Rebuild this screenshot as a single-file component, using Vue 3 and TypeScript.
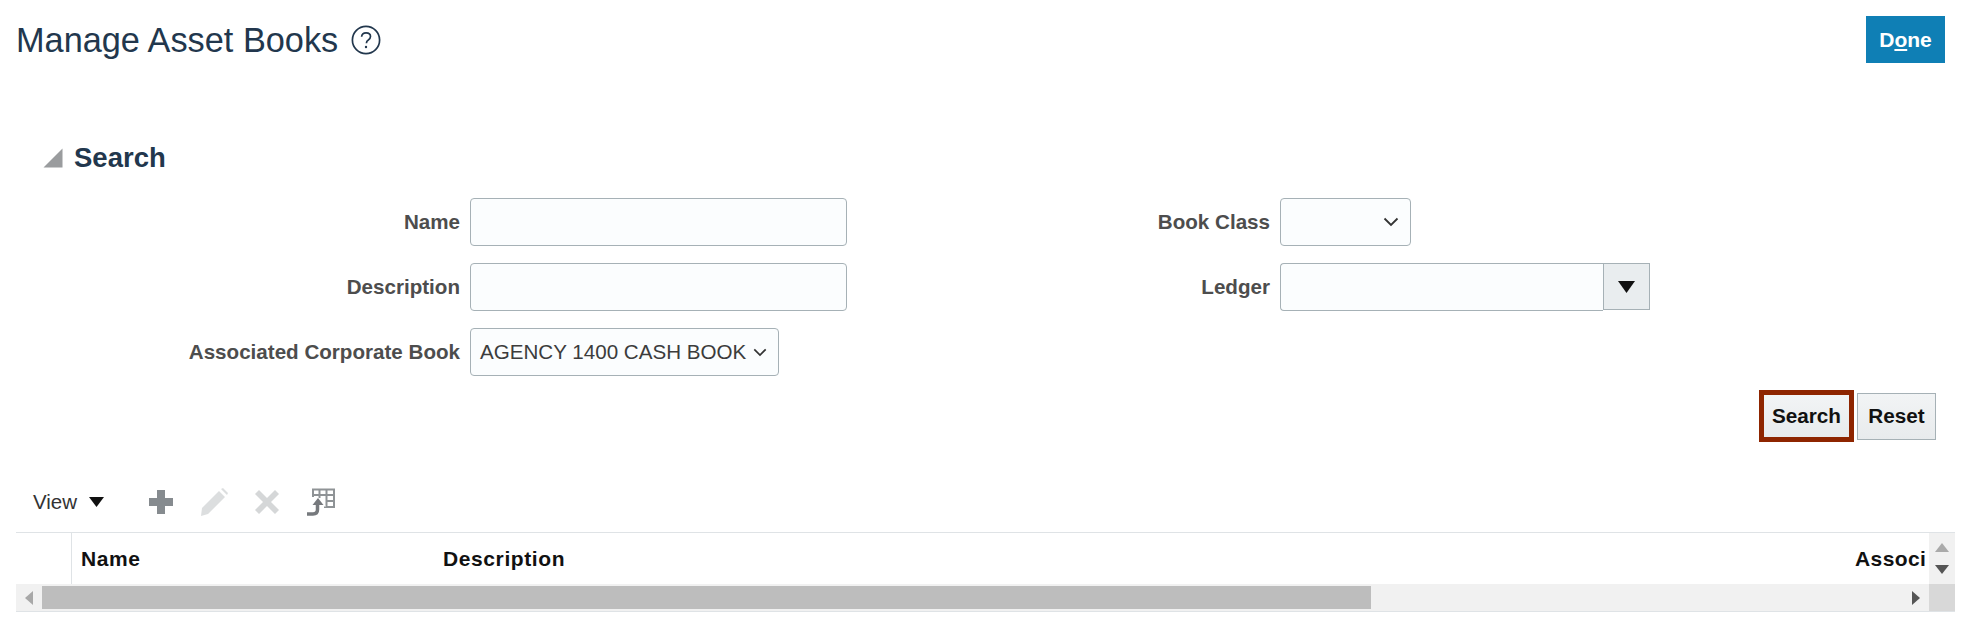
<script setup lang="ts">
const toolbarTitle = 'Manage Asset Books';
</script>

<template>
  <div class="page">
    <header class="page-head">
      <h1 class="page-title">
        {{ toolbarTitle }}
        <svg class="help" width="30" height="30" viewBox="0 0 30 30" fill="none">
          <circle cx="15" cy="15" r="13.6" stroke="#22374d" stroke-width="1.7" />
          <path d="M10.6 11.8c.2-2.6 2-4 4.500-4 2.600 0 4.400 1.500 4.400 3.700 0 1.700-.9 2.600-2.200 3.500-1.400.9-1.900 1.600-1.900 3.200" stroke="#22374d" stroke-width="1.700" />
          <circle cx="15" cy="22" r="1.200" fill="#22374d" />
        </svg>
      </h1>
      <button class="done">D<u>o</u>ne</button>
    </header>

    <section class="search-head">
      <svg width="20" height="20" viewBox="0 0 20 20"><path d="M19.500 .5v19H.5z" fill="#9a9c9e" /></svg>
      <h2>Search</h2>
    </section>

    <form class="form" @submit.prevent>
      <label class="lbl">Name</label>
      <div class="input name-input"></div>
      <label class="lbl">Book Class</label>
      <div class="input select class-select">
        <svg width="16" height="10" viewBox="0 0 16 10" fill="none"><path d="M1.500 1.500 8 8l6.500-6.500" stroke="#333" stroke-width="1.800" /></svg>
      </div>

      <label class="lbl">Description</label>
      <div class="input name-input"></div>
      <label class="lbl">Ledger</label>
      <div class="ledger">
        <div class="input ledger-input"></div>
        <div class="ledger-btn">
          <svg width="17" height="12" viewBox="0 0 17 12"><path d="M0 0h17L8.500 12z" fill="#111" /></svg>
        </div>
      </div>

      <label class="lbl">Associated Corporate Book</label>
      <div class="input select book-select">
        <span>AGENCY 1400 CASH BOOK</span>
        <svg width="14" height="9" viewBox="0 0 14 9" fill="none"><path d="M1.300 1.300 7 7l5.700-5.700" stroke="#333" stroke-width="1.700" /></svg>
      </div>
    </form>

    <div class="actions">
      <button class="btn btn-active">Search</button>
      <button class="btn">Reset</button>
    </div>

    <div class="toolbar">
      <span class="view">View</span>
      <svg class="view-caret" width="15" height="10" viewBox="0 0 15 10"><path d="M0 0h15L7.500 10z" fill="#111" /></svg>
      <svg class="tool tool-add" width="26" height="26" viewBox="0 0 26 26"><path d="M9 1h8v8h8v8h-8v8H9v-8H1V9h8z" fill="#868b8f" /></svg>
      <svg class="tool tool-edit" width="30" height="30" viewBox="0 0 30 30"><path d="M3 21 20 4l6 6L9 27l-7 2zM22 2l2-1 5 5-1 2z" fill="#dcdedf" /></svg>
      <svg class="tool tool-del" width="26" height="26" viewBox="0 0 26 26"><path d="m5 1 8 8 8-8 4 4-8 8 8 8-4 4-8-8-8 8-4-4 8-8-8-8z" fill="#d5d7d8" /></svg>
      <svg class="tool tool-freeze" width="28" height="28" viewBox="0 0 28 28" fill="none">
        <path d="M6 9V1.500h21V19H17M6 7h21M12.500 2v8M19.500 2v17M19 13h8" stroke="#8f9396" stroke-width="2" />
        <path d="M4 18.500l7.500-9 7.500 9z" fill="#fff" />
        <path d="M0 26h6q4.500 0 4.500-4.500V16" stroke="#76797d" stroke-width="3.500" />
        <path d="M5.500 17l5.500-7 5.500 7z" fill="#76797d" />
      </svg>
    </div>

    <div class="table">
      <div class="thead">
        <div class="th th-sel"></div>
        <div class="th th-name">Name</div>
        <div class="th th-desc">Description</div>
        <div class="th th-assoc">Associ</div>
        <div class="vscroll">
          <svg width="14" height="9" viewBox="0 0 14 9"><path d="M7 0l7 9H0z" fill="#aaa" /></svg>
          <svg width="14" height="9" viewBox="0 0 14 9"><path d="M0 0h14L7 9z" fill="#555" /></svg>
        </div>
      </div>
      <div class="hscroll">
        <div class="arrow">
          <svg width="8" height="14" viewBox="0 0 8 14"><path d="M8 0v14L0 7z" fill="#a8a8a8" /></svg>
        </div>
        <div class="track"><div class="thumb"></div></div>
        <div class="arrow">
          <svg width="8" height="14" viewBox="0 0 8 14"><path d="M0 0v14l8-7z" fill="#555" /></svg>
        </div>
        <div class="corner"></div>
      </div>
    </div>
  </div>
</template>

<style scoped>
.page {
  width: 1962px;
  height: 629px;
  overflow: hidden;
  background: #fff;
  font-family: "Liberation Sans", Arial, sans-serif;
  box-sizing: border-box;
  padding-top: 16px;
}

.page-head {
  display: flex;
  justify-content: space-between;
  align-items: flex-start;
  height: 47px;
  padding: 0 17px 0 16px;
}

.page-title {
  margin: 7px 0 0;
  display: flex;
  align-items: center;
  gap: 13px;
  font-size: 34.300px;
  line-height: 34px;
  font-weight: 400;
  color: #22374d;
}

.done {
  width: 79px;
  height: 47px;
  padding: 0;
  border: 0;
  background: #0f7fb5;
  color: #fff;
  font: bold 21px "Liberation Sans", Arial, sans-serif;
}

.search-head {
  display: flex;
  align-items: center;
  gap: 11px;
  margin: 77px 0 0 43px;
  height: 36px;
}

.search-head h2 {
  margin: 0;
  font-size: 27.500px;
  font-weight: 700;
  color: #22374d;
}

.form {
  display: grid;
  grid-template-columns: 460px 630px 160px auto;
  grid-auto-rows: 48px;
  column-gap: 10px;
  row-gap: 17px;
  margin-top: 22px;
}

.lbl {
  align-self: center;
  text-align: right;
  font-size: 20.600px;
  font-weight: 700;
  color: #4d4d4d;
}

.input {
  box-sizing: border-box;
  height: 48px;
  border: 1px solid #a6b1b6;
  border-radius: 4px;
  background: #fbfdfe;
}

.name-input {
  width: 377px;
}

.select {
  display: flex;
  align-items: center;
  justify-content: space-between;
  padding: 0 11px 0 9px;
  font-size: 20.600px;
  color: #3c3c3c;
}

.class-select {
  width: 131px;
  justify-content: flex-end;
}

.book-select {
  width: 309px;
}

.ledger {
  display: flex;
}

.ledger-input {
  width: 323px;
  border-right: 0;
  border-radius: 4px 0 0 4px;
}

.ledger-btn {
  box-sizing: border-box;
  width: 47px;
  height: 47px;
  display: flex;
  align-items: center;
  justify-content: center;
  border: 1px solid #a6b1b6;
  background: #e9edef;
}

.actions {
  display: flex;
  justify-content: flex-end;
  align-items: center;
  gap: 3px;
  padding-right: 26px;
  margin-top: 14px;
  height: 52px;
}

.btn {
  box-sizing: border-box;
  width: 79px;
  height: 47px;
  padding: 0;
  border: 1px solid #a6b1b6;
  background: linear-gradient(#f2f4f5, #e8ebed);
  color: #111;
  font: bold 20.700px "Liberation Sans", Arial, sans-serif;
}

.btn-active {
  width: 95px;
  height: 52px;
  border: 5px solid #8e2500;
}

.toolbar {
  display: flex;
  align-items: center;
  height: 40px;
  margin-top: 40px;
  padding-left: 33px;
}

.view {
  font-size: 20.500px;
  color: #333;
}

.view-caret {
  margin-left: 12px;
}

.tool-add {
  margin-left: 44px;
}

.tool-edit {
  margin-left: 25px;
}

.tool-del {
  margin-left: 25px;
}

.tool-freeze {
  margin-left: 27px;
}

.table {
  width: 1939px;
  margin: 10px 0 0 16px;
  border-top: 1px solid #dfe3e6;
  border-bottom: 1px solid #dfe3e6;
}

.thead {
  display: flex;
  height: 51px;
}

.th {
  box-sizing: border-box;
  padding-top: 14px;
  font-size: 21px;
  font-weight: 700;
  letter-spacing: 0.6px;
  color: #111;
}

.th-sel {
  width: 56px;
  border-right: 1px solid #dfe3e6;
}

.th-name {
  width: 371px;
  padding-left: 9px;
}

.th-desc {
  flex: 1;
}

.th-assoc {
  width: 74px;
  overflow: hidden;
  white-space: nowrap;
  letter-spacing: 0.4px;
}

.vscroll {
  width: 26px;
  display: flex;
  flex-direction: column;
  align-items: center;
  justify-content: space-between;
  padding: 10px 0 10px;
  box-sizing: border-box;
  background: #f1f1f1;
}

.hscroll {
  display: flex;
  height: 27px;
  background: #f1f1f1;
}

.arrow {
  width: 26px;
  display: flex;
  align-items: center;
  justify-content: center;
}

.track {
  flex: 1;
  padding: 2px 0;
}

.thumb {
  width: 1329px;
  height: 100%;
  background: #bdbdbd;
}

.corner {
  width: 26px;
  background: #d8d8d8;
}
</style>
